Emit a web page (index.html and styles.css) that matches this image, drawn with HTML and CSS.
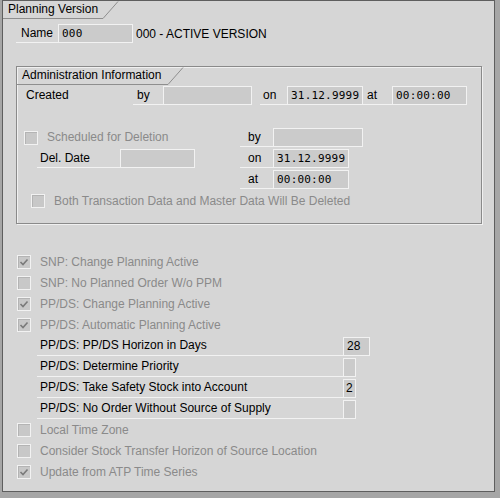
FILE: index.html
```
<!DOCTYPE html>
<html>
<head>
<meta charset="utf-8">
<link rel="stylesheet" href="styles.css">
</head>
<body>
<div class="panel">
  <div class="tab">
    <span class="tab-label w-outer">Planning Version</span>
    <svg class="tab-diag" width="16" height="18" viewBox="0 0 16 18"><line x1="0" y1="17.5" x2="15" y2="0.5" stroke="#8e8e8e" stroke-width="1"/></svg>
  </div>

  <div class="row name-row">
    <span class="lbl lbl-name">Name</span>
    <span class="field f-name">000</span>
    <span class="plain">000 - ACTIVE VERSION</span>
  </div>

  <div class="group">
    <div class="tab">
      <span class="tab-label w-group">Administration Information</span>
      <svg class="tab-diag" width="16" height="18" viewBox="0 0 16 18"><line x1="0" y1="17.5" x2="15" y2="0.5" stroke="#8e8e8e" stroke-width="1"/></svg>
    </div>

    <div class="row created-row">
      <span class="lbl lbl-created nol">Created</span>
      <span class="lbl lbl-by">by</span>
      <span class="field f-by"></span>
      <span class="lbl lbl-on">on</span>
      <span class="field f-date">31.12.9999</span>
      <span class="lbl lbl-at">at</span>
      <span class="field f-time">00:00:00</span>
    </div>

    <div class="del-grid">
      <div class="del-left">
        <div class="drow">
          <span class="cb cb-sched"></span>
          <span class="dis">Scheduled for Deletion</span>
        </div>
        <div class="drow">
          <span class="lbl lbl-deldate">Del. Date</span>
          <span class="field f-deldate"></span>
        </div>
      </div>
      <div class="del-right">
        <div class="drow">
          <span class="lbl lbl-r">by</span>
          <span class="field f-rby"></span>
        </div>
        <div class="drow">
          <span class="lbl lbl-r">on</span>
          <span class="field f-rdate">31.12.9999</span>
        </div>
        <div class="drow">
          <span class="lbl lbl-r">at</span>
          <span class="field f-rdate">00:00:00</span>
        </div>
      </div>
    </div>

    <div class="row both-row">
      <span class="cb"></span>
      <span class="dis">Both Transaction Data and Master Data Will Be Deleted</span>
    </div>
  </div>

  <div class="list">
    <div class="lrow"><span class="cb on"><svg width="12" height="12" viewBox="0 0 12 12"><polyline points="2.5,6 5,8.5 9.5,3.5" fill="none" stroke="#7a7a7a" stroke-width="1.6"/></svg></span><span class="dis">SNP: Change Planning Active</span></div>
    <div class="lrow"><span class="cb"></span><span class="dis">SNP: No Planned Order W/o PPM</span></div>
    <div class="lrow"><span class="cb on"><svg width="12" height="12" viewBox="0 0 12 12"><polyline points="2.5,6 5,8.5 9.5,3.5" fill="none" stroke="#7a7a7a" stroke-width="1.6"/></svg></span><span class="dis">PP/DS: Change Planning Active</span></div>
    <div class="lrow"><span class="cb on"><svg width="12" height="12" viewBox="0 0 12 12"><polyline points="2.5,6 5,8.5 9.5,3.5" fill="none" stroke="#7a7a7a" stroke-width="1.6"/></svg></span><span class="dis">PP/DS: Automatic Planning Active</span></div>
    <div class="lrow frow"><span class="lbl lbl-pp">PP/DS: PP/DS Horizon in Days</span><span class="field f-28">28</span></div>
    <div class="lrow frow"><span class="lbl lbl-pp">PP/DS: Determine Priority</span><span class="field f-1"></span></div>
    <div class="lrow frow"><span class="lbl lbl-pp">PP/DS: Take Safety Stock into Account</span><span class="field f-1">2</span></div>
    <div class="lrow frow"><span class="lbl lbl-pp">PP/DS: No Order Without Source of Supply</span><span class="field f-1"></span></div>
    <div class="lrow"><span class="cb"></span><span class="dis">Local Time Zone</span></div>
    <div class="lrow"><span class="cb"></span><span class="dis">Consider Stock Transfer Horizon of Source Location</span></div>
    <div class="lrow"><span class="cb on"><svg width="12" height="12" viewBox="0 0 12 12"><polyline points="2.5,6 5,8.5 9.5,3.5" fill="none" stroke="#7a7a7a" stroke-width="1.6"/></svg></span><span class="dis">Update from ATP Time Series</span></div>
  </div>
</div>
</body>
</html>
```
FILE: styles.css
```
* { box-sizing: border-box; }
html, body { margin: 0; padding: 0; }
body {
  background: #a6a6a6;
  font-family: "Liberation Sans", Arial, sans-serif;
  font-size: 12px;
  color: #000;
  width: 500px;
  height: 498px;
  overflow: hidden;
}
.panel {
  margin-left: 2px;
  width: 493px;
  height: 492px;
  border: 1px solid #5e5e5e;
  background: #d6d6d6;
}
.tab { display: flex; height: 18px; }
.tab-label {
  height: 18px;
  line-height: 17px;
  padding-left: 5px;
  border-bottom: 1px solid #8e8e8e;
  white-space: nowrap;
}
.w-outer { width: 100px; }
.w-group { width: 151px; }
.tab-diag { display: block; }

.row { display: flex; align-items: center; }
.lbl {
  display: inline-block;
  height: 19px;
  line-height: 18px;
  border-bottom: 1px solid #f2f2f2;
  white-space: nowrap;
}
.lbl.nol { border-bottom-color: transparent; }
.field {
  display: inline-block;
  height: 19px;
  border: 1px solid #f2f2f2;
  background: #cbcbcb;
  font-family: "DejaVu Sans Mono", "Liberation Mono", monospace;
  font-size: 11px;
  letter-spacing: 0.2px;
  line-height: 17px;
  padding-left: 3px;
  white-space: nowrap;
}
.plain { margin-left: 3px; }
.dis { color: #8a8a8a; white-space: nowrap; }

.name-row { margin: 5px 0 0 13px; height: 19px; }
.lbl-name { width: 42px; padding-left: 5px; }
.f-name { width: 75px; }

.group {
  margin: 23px 0 0 13px;
  width: 466px;
  height: 158px;
  border: 1px solid #8a8a8a;
  box-shadow: 1px 1px 0 #f0f0f0, inset 1px 1px 0 #f0f0f0;
}
.created-row { margin: 1px 0 0 4px; height: 19px; align-items: flex-start; }
.lbl-created { width: 112px; padding-left: 5px; }
.lbl-by { width: 30px; padding-left: 4px; }
.f-by { width: 89px; }
.lbl-on { width: 27px; padding-left: 3px; margin-left: 8px; }
.f-date { width: 76px; }
.lbl-at { width: 29px; padding-left: 4px; }
.f-time { width: 75px; }

.del-grid { display: flex; margin-top: 23px; }
.del-left { width: 223px; padding-left: 7px; }
.del-right { display: flex; flex-direction: column; }
.drow { display: flex; height: 21px; align-items: flex-start; }
.cb {
  display: inline-flex;
  align-items: center;
  justify-content: center;
  width: 14px;
  height: 14px;
  border: 1px solid #f2f2f2;
  background: #c8c8c8;
  box-shadow: inset 1px 1px 0 #b4b4b4;
  flex: none;
}
.cb svg { display: block; }
.cb-sched { margin-top: 3px; margin-right: 9px; }
.del-left .drow .dis { line-height: 19px; }
.lbl-deldate { width: 83px; padding-left: 3px; margin-left: 13px; }
.f-deldate { width: 75px; }
.lbl-r { width: 33px; padding-left: 8px; }
.f-rby { width: 90px; }
.f-rdate { width: 76px; }

.both-row { margin: 1px 0 0 14px; height: 18px; }
.both-row .cb { margin-right: 9px; }

.list { margin-top: 27px; padding-left: 14px; }
.lrow { display: flex; align-items: center; height: 21px; }
.lrow .cb { margin-right: 9px; }
.frow { align-items: flex-start; padding-top: 2px; }
.lbl-pp { width: 306px; margin-left: 20px; padding-left: 3px; line-height: 17px; }
.f-28 { width: 27px; }
.f-1 { width: 13px; padding-left: 2px; font-family: "Liberation Sans", Arial, sans-serif; font-size: 12px; letter-spacing: 0; }
.f-28 { font-family: "Liberation Sans", Arial, sans-serif; font-size: 12px; letter-spacing: 0; }
```
